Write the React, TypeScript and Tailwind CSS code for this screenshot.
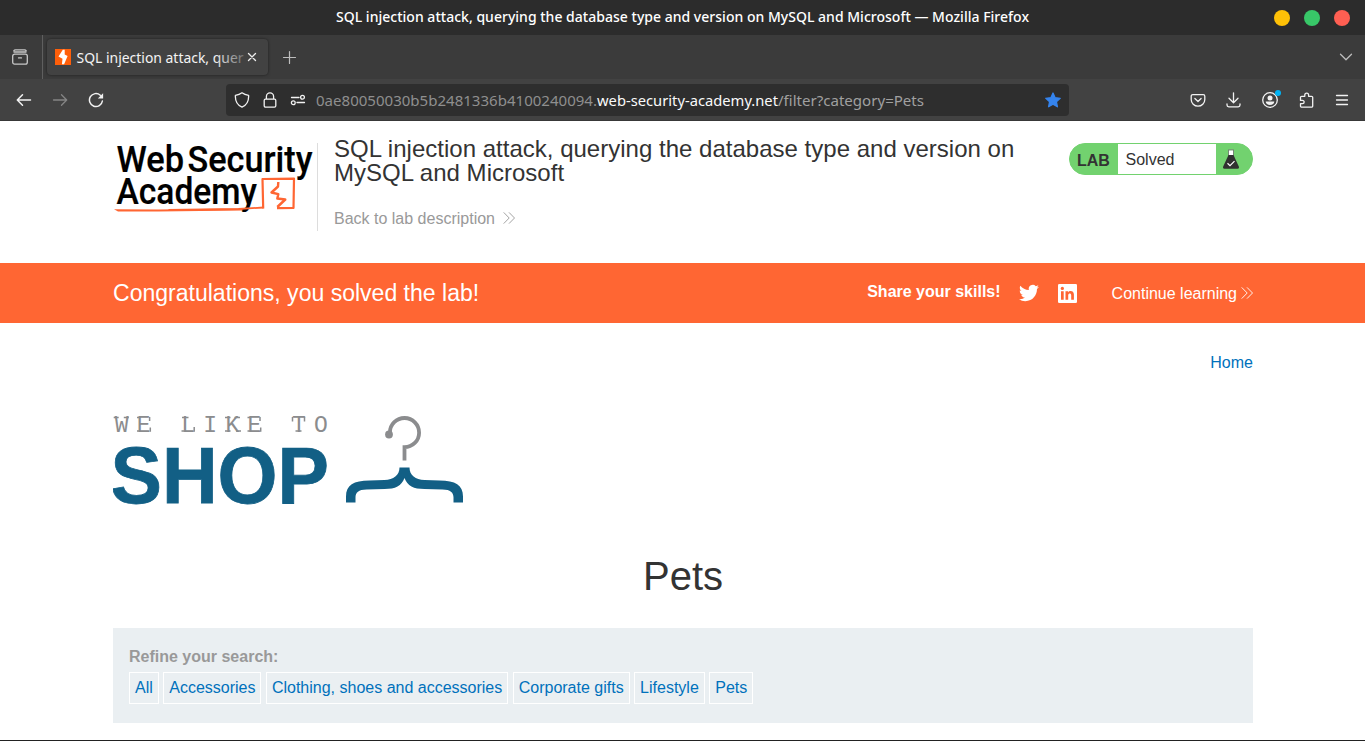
import React from "react";

type IconProps = { className?: string; children: React.ReactNode };

function Icon({ className = "", children }: IconProps) {
  return (
    <svg
      viewBox="0 0 16 16"
      className={`block h-4 w-4 shrink-0 ${className}`}
      fill="none"
      stroke="currentColor"
      strokeWidth="1.3"
      strokeLinecap="round"
      strokeLinejoin="round"
    >
      {children}
    </svg>
  );
}

function TitleBar() {
  return (
    <div className="flex h-[35px] items-center bg-[#2c2c2c] pr-[15px] pl-[336px]">
      <svg className="block h-5 w-[700px]" viewBox="0 0 700 20">
        <text x="0" y="13.5" textLength="693" fill="#fff" className="font-['Noto_Sans',sans-serif] text-[14px] font-medium">
          SQL injection attack, querying the database type and version on MySQL and Microsoft — Mozilla Firefox
        </text>
      </svg>
      <div className="ml-auto flex gap-3.5">
        <span className="h-4 w-4 rounded-full bg-[#ffc107]" />
        <span className="h-4 w-4 rounded-full bg-[#38c768]" />
        <span className="h-4 w-4 rounded-full bg-[#ff5f52]" />
      </div>
    </div>
  );
}

function TabBar() {
  return (
    <div className="flex h-[44px] items-center bg-[#3b3b3b]">
      <div className="flex h-full w-[43px] items-center border-r border-[#5f5f5f] pl-3">
        <Icon className="text-[#c8c8c8]">
          <path d="M3.500 .8h9a2 2 0 0 1 1.700 1M2.600 5.200h10.800a1.900 1.900 0 0 1 1.900 1.900v6.200a1.900 1.900 0 0 1-1.900 1.900H2.600a1.900 1.900 0 0 1-1.900-1.900V7.100a1.900 1.900 0 0 1 1.900-1.900zM6.500 8.900h3M3.500 .8a2 2 0 0 0-1.700 1M2 3h12" />
        </Icon>
      </div>
      <div className="ml-1 flex h-9 w-[221px] items-center rounded-[4px] bg-[#424242] pl-2 shadow-[0_0_3px_rgba(0,0,0,0.5)]">
        <svg className="block h-4 w-4 shrink-0" viewBox="0 0 16 16">
          <path d="M0 0h16v16H0z" fill="#ff5f0a" />
          <path d="M7.800 .8h1.900v4.700l2.900 1.500-3.500 8.200H6.900l.6-5.400-4-2.200z" fill="#fff" />
        </svg>
        <svg className="ml-[5px] block h-6 w-[170px] shrink-0" viewBox="0 0 170 24">
          <defs>
            <linearGradient id="tabFade" gradientUnits="userSpaceOnUse" x1="138" x2="170" y1="0" y2="0">
              <stop offset="0" stopColor="#f4f4f4" />
              <stop offset="1" stopColor="#f4f4f4" stopOpacity="0.2" />
            </linearGradient>
          </defs>
          <text x="0.5" y="18" textLength="167" lengthAdjust="spacingAndGlyphs" fill="url(#tabFade)" className="font-['Noto_Sans',sans-serif] text-[14.5px]">
            SQL injection attack, quer
          </text>
        </svg>
        <Icon className="-ml-[2px] text-[#eee]">
          <path d="M4.500 4.500l7 7M11.500 4.500l-7 7" />
        </Icon>
      </div>
      <Icon className="ml-3.5 text-[#bdbdbd]">
        <path d="M7.500 2.500v12M1.500 8.500h12" strokeWidth="1.2" />
      </Icon>
      <Icon className="mr-[11px] ml-auto text-[#bdbdbd]">
        <path d="M2.500 5.200L8 10.700l5.500-5.500" />
      </Icon>
    </div>
  );
}

function NavBar() {
  return (
    <div className="flex h-[42px] items-center border-b border-[#383838] bg-[#424242] text-[#f2f2f2]">
      <Icon className="ml-4">
        <path d="M14.500 8h-13M6.500 2.800L1.300 8l5.200 5.200" strokeWidth="1.5" />
      </Icon>
      <Icon className="ml-5 text-[#858585]">
        <path d="M1.500 8h13M9.500 2.800L14.700 8l-5.200 5.200" />
      </Icon>
      <Icon className="ml-5">
        <path d="M14.400 9A6.500 6.500 0 1 1 12.300 3.200" strokeWidth="1.5" />
        <path d="M15.100 1.200v5.300H9.800z" fill="currentColor" stroke="none" />
      </Icon>
      <div className="ml-[122px] flex h-8 w-[843px] items-center rounded-[4px] bg-[#2e2e2e]">
        <Icon className="ml-2">
          <path d="M8 .8c2 1.500 4 2.200 6.600 2.600.3 5-1.500 9.600-6.600 11.800C2.900 13 1.100 8.400 1.400 3.400 4 3 6 2.300 8 .8z" />
        </Icon>
        <Icon className="ml-3">
          <path d="M3.400 7.200h9.200a1.200 1.200 0 0 1 1.200 1.200v5.400a1.400 1.400 0 0 1-1.400 1.400H3.600a1.400 1.400 0 0 1-1.400-1.400V8.400a1.200 1.200 0 0 1 1.200-1.200zM4.400 7V4.400a3.600 3.600 0 0 1 7.200 0V7" />
        </Icon>
        <Icon className="ml-3">
          <path d="M1.500 5.500H9M7 10.500h7.500" />
          <circle cx="12.500" cy="5.200" r="1.900" />
          <circle cx="3.300" cy="10.800" r="1.900" />
        </Icon>
        <svg className="ml-[10px] block h-6 w-[612px]" viewBox="0 0 612 24">
          <g className="font-['Noto_Sans',sans-serif] text-[14.5px]">
            <text x="0" y="18" textLength="281" lengthAdjust="spacingAndGlyphs" fill="#8f8f8f">0ae80050030b5b2481336b4100240094.</text>
            <text x="281" y="18" textLength="181" lengthAdjust="spacingAndGlyphs" fill="#fafafa">web-security-academy.net</text>
            <text x="462" y="18" textLength="146" lengthAdjust="spacingAndGlyphs" fill="#a0a0a0">/filter?category=Pets</text>
          </g>
        </svg>
        <Icon className="mr-2 ml-auto text-[#3584ee]">
          <path d="M8 1l2.100 4.700 5.100.6-3.800 3.400 1 5.100L8 12.300l-4.400 2.500 1-5.100L.8 6.300l5.100-.6z" fill="currentColor" />
        </Icon>
      </div>
      <div className="mr-[15px] ml-auto flex items-center gap-5">
        <Icon>
          <path d="M2.800 2.600h10.400a1.600 1.600 0 0 1 1.600 1.600v3.200a6.800 6.800 0 0 1-13.600 0V4.200a1.600 1.600 0 0 1 1.600-1.600zM4.900 6.500L8 9.500l3.100-3" />
        </Icon>
        <Icon>
          <path d="M7.500 .8v9.700M3 6.200l4.500 4.500L12 6.200M1 12v1a1.800 1.800 0 0 0 1.800 1.800h9.400a1.800 1.800 0 0 0 1.800-1.800v-1" />
        </Icon>
        <div className="relative">
          <Icon>
            <circle cx="8" cy="8" r="7.300" />
            <circle cx="8" cy="6" r="2.500" fill="currentColor" stroke="none" />
            <path d="M3.700 9.400h8.600c0 2-1.900 3.600-4.300 3.600s-4.300-1.600-4.300-3.600z" fill="currentColor" stroke="none" />
          </Icon>
          <span className="absolute -top-[2px] -right-[3px] h-1.5 w-1.5 rounded-full bg-[#00b3f4]" />
        </div>
        <Icon>
          <path d="M2.500 8.400V5.500A1.200 1.200 0 0 1 3.700 4.300h3.100V3a1.900 1.900 0 0 1 3.800 0v1.300h2.900a1.200 1.200 0 0 1 1.200 1.200v8.500a1.200 1.200 0 0 1-1.200 1.200H3.700a1.200 1.200 0 0 1-1.200-1.200v-2.300h2a1.650 1.650 0 0 0 0-3.300z" />
        </Icon>
        <Icon>
          <path d="M2.500 3.500h11M2.500 8h11M2.500 12.500h11" />
        </Icon>
      </div>
    </div>
  );
}

function AcademyLogo() {
  return (
    <svg className="block h-[88px] w-[204px] shrink-0 overflow-visible" viewBox="113 143 204 88">
      <g fill="#000" stroke="#000" strokeWidth="0.2" className="font-[Roboto,sans-serif] text-[37px] font-medium">
        <text x="116.500" y="171.500" textLength="67.500" lengthAdjust="spacingAndGlyphs">Web</text>
        <text x="187.500" y="171.500" textLength="125" lengthAdjust="spacingAndGlyphs">Security</text>
        <text x="116.500" y="203.500" textLength="140.500" lengthAdjust="spacingAndGlyphs">Academy</text>
      </g>
      <g fill="none" stroke="#ff6633" strokeLinejoin="round">
        <path d="M263.200 208.500L262.500 179l31.500-.4-.5 29.400-16.500 .2" strokeWidth="2.2" />
        <path d="M278.300 182l-.3 4.500-6.500 6 6.800 1.700-1 4.300 8 1-8 7.500" strokeWidth="2.4" />
        <path d="M263.500 207.500l-25 1.500-70 1" strokeWidth="1.8" />
      </g>
      <path d="M114 209.200l44 .2 84-1v2.200l-84 .8-40 .2z" fill="#ff6633" />
    </svg>
  );
}

function Chevrons({ className = "" }: { className?: string }) {
  return (
    <svg viewBox="0 0 12 12" className={`block h-3 w-3 shrink-0 ${className}`} fill="none" stroke="currentColor" strokeWidth="0.9">
      <path d="M.7.4L6.200 6 .7 11.600M6 .4L11.500 6 6 11.600" />
    </svg>
  );
}

function LabStatus() {
  return (
    <div className="flex h-8 w-[184px] overflow-hidden rounded-full border border-[#72d26f] bg-[#72d26f] text-[#333]">
      <div className="w-12 pt-[5px] pl-[7px] text-base font-bold">LAB</div>
      <div className="w-[98px] bg-white pt-[4px] pl-[7.500px] text-base">Solved</div>
      <svg className="mt-[5px] ml-[6px] block h-5 w-[18px]" viewBox="0 0 18 20">
        <path d="M6 1h6M6.700 1v6M11.300 1v6" stroke="#777" strokeWidth="1" />
        <path d="M7 1.500h4V6H7z" fill="#fff" />
        <path d="M6.500 6h5l5.300 11.500c.5 1.300 0 2.300-1.300 2.300h-13c-1.300 0-1.800-1-1.300-2.300z" fill="#303030" />
        <path d="M5.500 14.300l2.500 2.400 4.500-4.500" fill="none" stroke="#fff" strokeWidth="1.2" />
      </svg>
    </div>
  );
}

function LabHeader() {
  return (
    <header className="ml-[113px] flex h-[142px] w-[1140px] items-start">
      <div className="mt-[22px] flex border-r border-[#ddd]">
        <AcademyLogo />
      </div>
      <div className="ml-4 w-[700px] pt-4">
        <h2 className="text-2xl leading-6 tracking-[0.012px] text-[#333]">
          SQL injection attack, querying the database type and version on MySQL and Microsoft
        </h2>
        <a className="mt-[22px] flex items-center gap-2 text-base leading-6 text-[#999]">
          Back to lab description
          <Chevrons className="-mt-[2px]" />
        </a>
      </div>
      <div className="mt-[22px] ml-auto">
        <LabStatus />
      </div>
    </header>
  );
}

function SolvedBanner() {
  return (
    <section className="h-[60px] bg-[#ff6633] text-white">
      <div className="ml-[113px] flex h-full w-[1140px] items-center">
        <h4 className="text-[23.040px] leading-8">Congratulations, you solved the lab!</h4>
        <span className="mb-[2px] ml-auto text-base leading-5 font-bold">Share your skills!</span>
        <svg viewBox="0 0 24 24" className="ml-[18px] block h-5 w-5" fill="#fff">
          <path d="M23.950 4.570a10 10 0 0 1-2.820.770 4.960 4.960 0 0 0 2.160-2.720c-.950.550-2 .950-3.130 1.180a4.920 4.920 0 0 0-8.380 4.480C7.690 8.100 4.070 6.130 1.640 3.160a4.820 4.820 0 0 0-.670 2.480c0 1.710.870 3.210 2.190 4.100a4.900 4.900 0 0 1-2.230-.620v.060a4.920 4.920 0 0 0 3.950 4.830 5 5 0 0 1-2.210.080 4.940 4.940 0 0 0 4.600 3.420A9.870 9.870 0 0 1 0 19.540a14 14 0 0 0 7.550 2.210c9.050 0 14-7.500 14-13.980 0-.210 0-.420-.020-.630a9.940 9.940 0 0 0 2.420-2.570z" />
        </svg>
        <svg viewBox="0 0 19 19" className="ml-[19.500px] block h-[19px] w-[19px]">
          <rect width="19" height="19" rx="1.3" fill="#fff" />
          <path d="M3 7.200h2.700v8.500H3zM7.500 7.200h2.600v1.200c1.300-2.200 5.800-2 5.800 2.200v5.100h-2.700v-4.500c0-2.500-3-2.300-3 0v4.500H7.500z" fill="#ff6633" />
          <circle cx="4.350" cy="4.400" r="1.600" fill="#ff6633" />
        </svg>
        <a className="mt-[2px] ml-[34.500px] flex items-center gap-1 text-base leading-5">
          Continue learning
          <Chevrons className="-mt-[2px]" />
        </a>
      </div>
    </section>
  );
}

function ShopLogo() {
  return (
    <svg className="block h-[92px] w-[352px]" viewBox="113 414 352 92">
      <text x="114.700" y="431.900" fill="#8b8c8e" letterSpacing="8.350" className="font-['Liberation_Mono',monospace] text-[23px]">
        WE LIKE TO
      </text>
      <path
        d="M113.700 417.500h5M123.800 417.500h5M137 417.500h3M137 431h3M149.600 417v4M150.300 427.500v4.200M182 417.500h6.500M181.500 431h4M194.200 427v4.700M225 417.500h5.500M234.500 417.500h5.500M225 431h5.500M236 431h5M247.500 417.500h3M247.500 431h3M260 417v4M260.700 427.500v4.200M292.500 417v4.500M304.500 417v4.500M295.500 431h6"
        fill="none"
        stroke="#8b8c8e"
        strokeWidth="1.5"
      />
      <text x="110.500" y="502.800" textLength="218.500" lengthAdjust="spacingAndGlyphs" fill="#125f85" stroke="#125f85" strokeWidth="0.8" className="font-['Liberation_Sans',sans-serif] text-[79.500px] font-bold">
        SHOP
      </text>
      <path d="M389.900 433.500v-1a14.600 14.600 0 1 1 14.600 14.700V460.500" fill="none" stroke="#8b8c8e" strokeWidth="3.8" />
      <circle cx="389" cy="434.500" r="3.900" fill="#8b8c8e" />
      <path d="M399.500 467.500h10c0 8 6 12 15 12.500l15 .5c16 0 23.500 4.500 23.500 16v6h-9.500v-5c0-5-3-8-11-8l-18-.5c-11 0-17-3-20-11-3 8-9 11-20 11l-18 .5c-8 0-11 3-11 8v5H346v-6c0-11.500 7.500-16 23.500-16l15-.5c9-.5 15-4.500 15-12.500z" fill="#125f85" />
    </svg>
  );
}

const categories = ["All", "Accessories", "Clothing, shoes and accessories", "Corporate gifts", "Lifestyle", "Pets"];

function Shop() {
  return (
    <main className="ml-[113px] flex h-[417px] w-[1140px] flex-col">
      <nav className="mt-[28px] self-end text-base leading-6 text-[#0071bc]">Home</nav>
      <div className="mt-[39px]">
        <ShopLogo />
      </div>
      <h1 className="mt-[46px] text-center text-[40px] leading-[48px] text-[#333]">Pets</h1>
      <section className="mt-[28px] h-[95px] bg-[#eaeff2] pt-[19px] pl-4 text-base">
        <div className="leading-5 font-bold text-[#999]">Refine your search:</div>
        <div className="mt-[5px] flex gap-[4.450px] leading-[30px] text-[#0071bc]">
          {categories.map((name) => (
            <a key={name} className="border border-white px-[5px]">
              {name}
            </a>
          ))}
        </div>
      </section>
    </main>
  );
}

export default function App() {
  return (
    <div className="h-[741px] w-[1365px] overflow-hidden bg-white font-['Liberation_Sans',Arial,sans-serif]">
      <TitleBar />
      <TabBar />
      <NavBar />
      <LabHeader />
      <SolvedBanner />
      <Shop />
      <div className="h-px bg-[#222]" />
    </div>
  );
}
